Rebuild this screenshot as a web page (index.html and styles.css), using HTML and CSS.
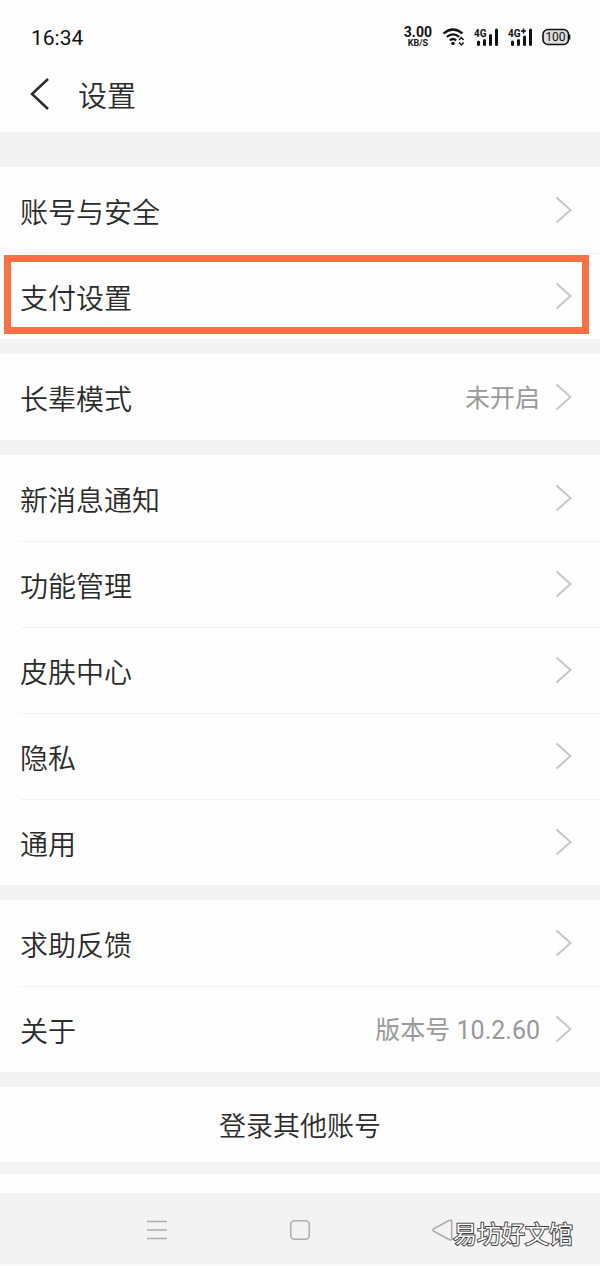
FILE: index.html
```html
<!DOCTYPE html>
<html lang="zh-CN">
<head>
<meta charset="utf-8">
<meta name="viewport" content="width=device-width, initial-scale=1">
<title>设置</title>
<link rel="stylesheet" href="styles.css">
</head>
<body>
<svg class="symbols" aria-hidden="true">
  <symbol id="chevron" viewBox="0 0 18 28"><path d="M1.500 1.500L15.500 14L1.500 26.500"/></symbol>
</svg>
<header>
  <div class="status">
    <time class="clock">16:34</time>
    <div class="indicators">
      <div class="speed"><span class="rate">3.00</span><span class="unit">KB/S</span></div>
      <svg class="wifi" width="24" height="20" viewBox="0 0 24 20" aria-label="Wi-Fi">
        <g fill="none" stroke="#111" stroke-width="2.200">
          <path d="M1.500 6.500Q11 -1.500 20.500 6.500M4.800 10Q11 4.800 17.200 10M7.800 13.300Q11 10.700 14.200 13.300"/>
        </g>
        <circle cx="11" cy="16.500" r="1.700" fill="#111"/>
        <path d="M17 13L19.300 10.500L21.600 13M17 15.500L19.300 18L21.600 15.500" fill="none" stroke="#111" stroke-width="1.500"/>
      </svg>
      <svg class="signal" width="26" height="20" viewBox="0 0 26 20" aria-label="4G">
        <text x="0" y="10">4G</text>
        <path d="M4.500 15V17.500M10.500 13.500V17.500M16.500 8.500V17.500M22.500 3V17.500"/>
      </svg>
      <svg class="signal" width="26" height="20" viewBox="0 0 26 20" aria-label="4G+">
        <text x="0" y="10">4G</text>
        <path class="plus" d="M13 4H18M15.500 1.500V6.500"/>
        <path d="M4.500 15V17.500M10.500 13.500V17.500M16.500 10V17.500M22.500 3V17.500"/>
      </svg>
      <svg class="battery" width="29" height="18" viewBox="0 0 29 18" aria-label="100%">
        <rect x="1" y="1.500" width="25.500" height="15" rx="5" fill="#ddd" stroke="#111" stroke-width="1.600"/>
        <path d="M27.500 6.500V11.500" stroke="#111" stroke-width="1.600"/>
        <text x="13.500" y="13.300" text-anchor="middle">100</text>
      </svg>
    </div>
  </div>
  <div class="titlebar">
    <button class="back" type="button" aria-label="返回">
      <svg width="20" height="32" viewBox="0 0 20 32"><path d="M19 1L3 16L19 31"/></svg>
    </button>
    <h1>设置</h1>
  </div>
</header>
<main>
  <ul class="group">
    <li><a class="row" href="#security"><span class="label">账号与安全</span><svg class="arrow"><use href="#chevron"/></svg></a></li>
    <li><a class="row marked" href="#payment"><span class="label">支付设置</span><svg class="arrow"><use href="#chevron"/></svg></a></li>
  </ul>
  <ul class="group">
    <li><a class="row" href="#elder"><span class="label">长辈模式</span><span class="value">未开启</span><svg class="arrow"><use href="#chevron"/></svg></a></li>
  </ul>
  <ul class="group">
    <li><a class="row" href="#messages"><span class="label">新消息通知</span><svg class="arrow"><use href="#chevron"/></svg></a></li>
    <li><a class="row" href="#features"><span class="label">功能管理</span><svg class="arrow"><use href="#chevron"/></svg></a></li>
    <li><a class="row" href="#skins"><span class="label">皮肤中心</span><svg class="arrow"><use href="#chevron"/></svg></a></li>
    <li><a class="row" href="#privacy"><span class="label">隐私</span><svg class="arrow"><use href="#chevron"/></svg></a></li>
    <li><a class="row" href="#general"><span class="label">通用</span><svg class="arrow"><use href="#chevron"/></svg></a></li>
  </ul>
  <ul class="group">
    <li><a class="row" href="#help"><span class="label">求助反馈</span><svg class="arrow"><use href="#chevron"/></svg></a></li>
    <li><a class="row" href="#about"><span class="label">关于</span><span class="value">版本号 10.2.60</span><svg class="arrow"><use href="#chevron"/></svg></a></li>
  </ul>
  <button class="switch" type="button">登录其他账号</button>
</main>
<div class="tail"></div>
<footer>
  <nav class="keys">
    <button type="button" aria-label="菜单"><svg width="24" height="24" viewBox="0 0 24 24"><path d="M2 3.500H22M2 12H22M2 20.500H22"/></svg></button>
    <button type="button" aria-label="主页"><svg width="24" height="24" viewBox="0 0 24 24"><rect x="2.700" y="2.700" width="18.600" height="18.600" rx="4"/></svg></button>
    <button type="button" aria-label="后退"><svg width="24" height="24" viewBox="0 0 24 24"><path d="M2.800 10.700L18.500 2.200Q20.700 1.300 20.700 3.500V20.500Q20.700 22.700 18.500 21.800L2.800 13.300Q1 12 2.800 10.700Z"/></svg></button>
  </nav>
  <span class="watermark">易坊好文馆</span>
</footer>
</body>
</html>
```
FILE: styles.css
```css
* { box-sizing: border-box; }
body {
  margin: 0;
  background: #fefefe;
  color: #2b2b2b;
  font-family: "Noto Sans CJK SC", sans-serif;
  font-weight: 350;
}
svg { display: block; flex: none; }
button { border: 0; padding: 0; background: none; color: inherit; font-family: inherit; font-weight: inherit; }
.symbols { width: 0; height: 0; position: absolute; }
.status {
  display: flex;
  align-items: center;
  justify-content: space-between;
  height: 56px;
  padding: 18px 29px 0 31px;
  color: #111;
}
.clock { font: 21px/32px Roboto, sans-serif; padding-top: 2px; }
.indicators { display: flex; align-items: center; gap: 8px; }
.speed {
  display: flex;
  flex-direction: column;
  align-items: center;
  font-family: Roboto, sans-serif;
  font-weight: 700;
}
.rate { font-size: 14px; line-height: 13px; }
.unit { font-size: 9px; line-height: 9px; }
.wifi { margin-left: 2px; }
.signal path { fill: none; stroke: #111; stroke-width: 3; stroke-linecap: round; }
.signal .plus { stroke-width: 1.500; stroke-linecap: butt; }
.signal text { font: 700 10px Roboto, sans-serif; fill: #111; }
.battery text { font: 12px Roboto, sans-serif; fill: #111; }
.titlebar { display: flex; align-items: center; height: 76px; padding: 0 30px 0 29px; gap: 29px; }
.back path { fill: none; stroke: #2b2b2b; stroke-width: 2.500; }
h1 { margin: 0; font-size: 29px; line-height: 40px; font-weight: inherit; }
main {
  display: flex;
  flex-direction: column;
  gap: 15px;
  padding: 35px 0 12px;
  background: #f3f3f3;
}
.group { margin: 0; padding: 0; list-style: none; background: #fefefe; }
.row {
  position: relative;
  display: flex;
  align-items: center;
  height: 86px;
  padding: 0 27px 0 20px;
  color: inherit;
  font-size: 28px;
  line-height: 40px;
  text-decoration: none;
}
li + li { background: linear-gradient(#f3f3f3, #f3f3f3) 20px 0 / 100% 1px no-repeat; }
.label { padding-top: 2px; }
.arrow { width: 18px; height: 28px; margin-left: auto; fill: none; stroke: #c6c6c6; stroke-width: 2; }
.value {
  margin-left: auto;
  padding-top: 4px;
  font-family: Roboto, "Noto Sans CJK SC", sans-serif;
  font-size: 25px;
  font-weight: 400;
  color: #999;
}
.value + .arrow { margin-left: 15px; }
.marked::after {
  content: "";
  position: absolute;
  inset: 2px 11px 5px 4px;
  border: 7px solid #fc7044;
}
.switch { height: 75px; background: #fefefe; font-size: 27px; line-height: 40px; }
.tail { height: 19px; }
footer { position: relative; background: #f3f3f3; border-bottom: 2px solid #fafafa; }
.keys { display: flex; justify-content: center; gap: 119px; padding: 25px 0 22px; }
.keys svg { fill: none; stroke: #adadad; stroke-width: 1.600; }
.watermark {
  position: absolute;
  right: 27px;
  top: 22px;
  font-size: 24px;
  line-height: 36px;
  color: #fff;
  -webkit-text-stroke: 2px #444;
  paint-order: stroke fill;
}
```
